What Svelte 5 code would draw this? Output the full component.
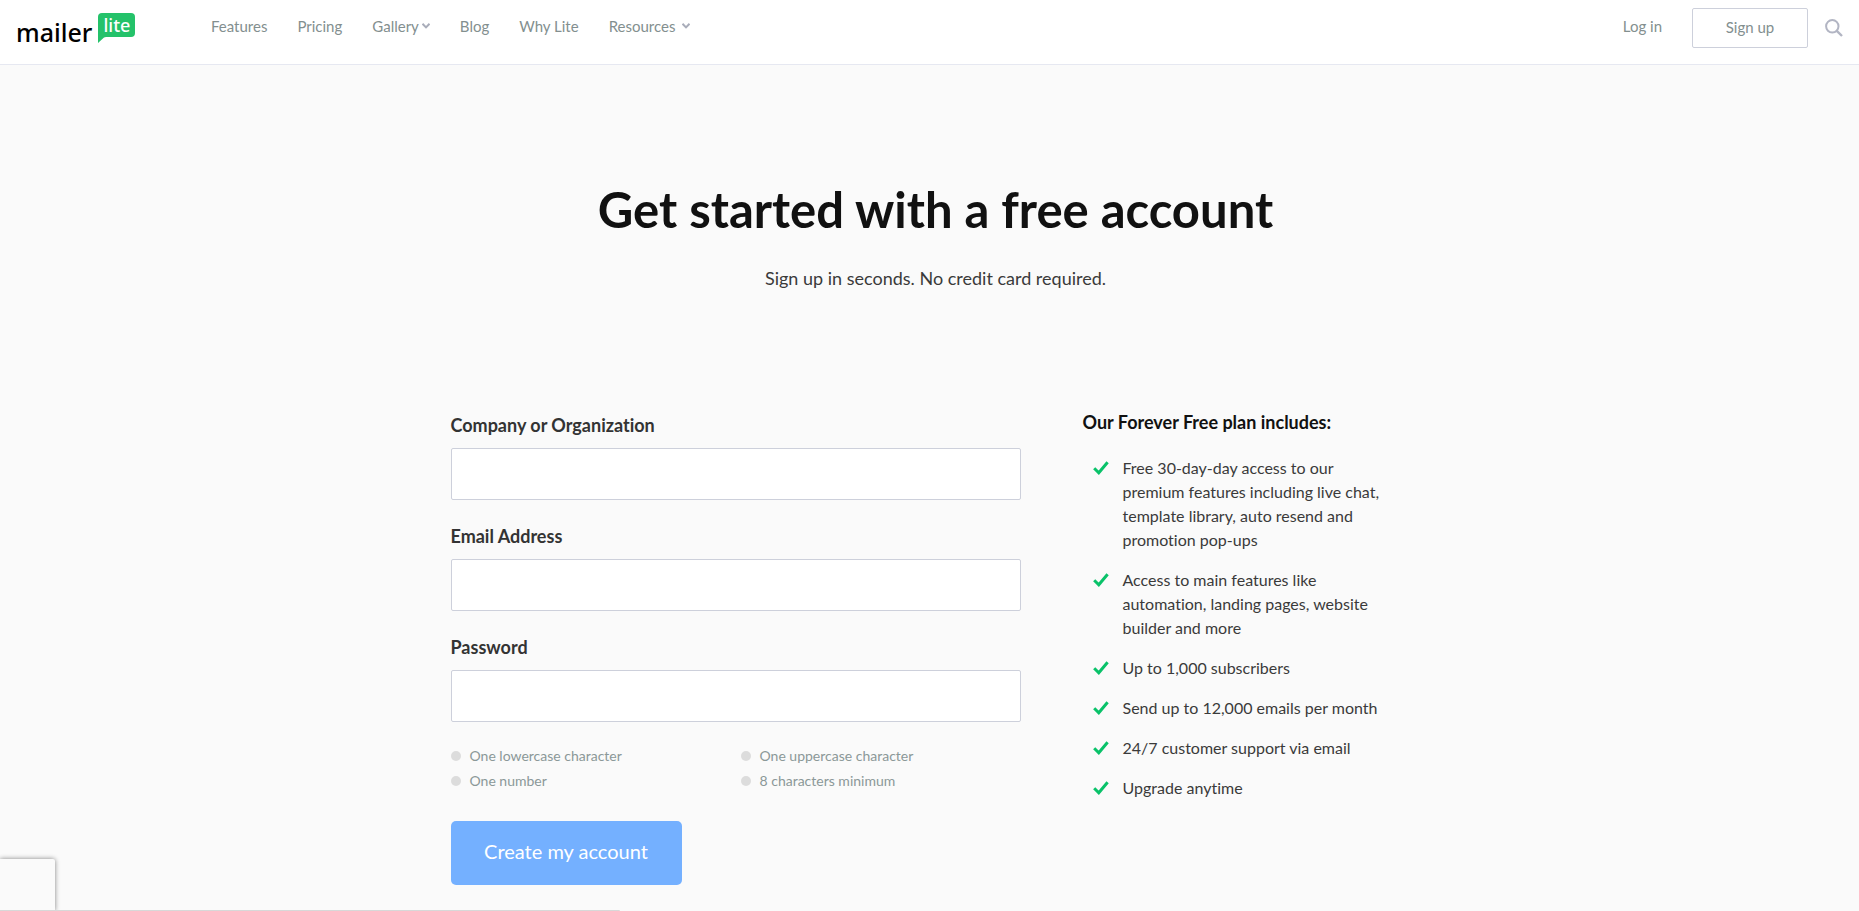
<script lang="ts">
  let company = $state("");
  let email = $state("");
  let password = $state("");

  const links = [
    { label: "Features" },
    { label: "Pricing" },
    { label: "Gallery", menu: "tight" },
    { label: "Blog" },
    { label: "Why Lite" },
    { label: "Resources", menu: "loose" },
  ];

  const rules = [
    "One lowercase character",
    "One uppercase character",
    "One number",
    "8 characters minimum",
  ];

  const features = [
    "Free 30-day-day access to our premium features including live chat, template library, auto resend and promotion pop-ups",
    "Access to main features like automation, landing pages, website builder and more",
    "Up to 1,000 subscribers",
    "Send up to 12,000 emails per month",
    "24/7 customer support via email",
    "Upgrade anytime",
  ];

  function handleSubmit(event: SubmitEvent) {
    event.preventDefault();
  }
</script>

<div class="page">
  <header class="header">
    <a class="logo" href="#home" aria-label="MailerLite">
      <span class="logo-name">mailer</span>
      <span class="logo-tag">
        lite
        <svg class="logo-tail" width="8" height="6" viewBox="0 0 8 6" aria-hidden="true">
          <path d="M0 0H8L6 0.6L0 6Z" fill="#24c26a" />
        </svg>
      </span>
    </a>

    <nav class="nav">
      {#each links as link}
        <a class="nav-link {link.menu ?? ''}" href="#{link.label}">
          {link.label}
          {#if link.menu}
            <svg width="8" height="6" viewBox="0 0 8 6" aria-hidden="true">
              <path d="M0.5 0.8L4 4.4L7.5 0.8" fill="none" stroke="#a9adba" stroke-width="2" />
            </svg>
          {/if}
        </a>
      {/each}
    </nav>

    <div class="actions">
      <a class="nav-link" href="#login">Log in</a>
      <a class="signup" href="#signup">Sign up</a>
      <button class="search" type="button" aria-label="Search">
        <svg width="18" height="18" viewBox="0 0 18 18" aria-hidden="true">
          <g fill="none" stroke="#b2b5c3" stroke-width="2">
            <circle cx="7.3" cy="7.3" r="6.2" />
            <path d="M11.8 11.8L17 17" stroke-width="2.4" />
          </g>
        </svg>
      </button>
    </div>
  </header>

  <main class="main">
    <h1>Get started with a free account</h1>
    <p class="subtitle">Sign up in seconds. No credit card required.</p>

    <div class="columns">
      <form class="form" onsubmit={handleSubmit}>
        <div class="fields">
          <div class="field">
            <label for="company">Company or Organization</label>
            <input id="company" type="text" bind:value={company} />
          </div>
          <div class="field">
            <label for="email">Email Address</label>
            <input id="email" type="email" bind:value={email} />
          </div>
          <div class="field">
            <label for="password">Password</label>
            <input id="password" type="password" bind:value={password} />
          </div>
        </div>

        <ul class="rules">
          {#each rules as rule}
            <li>{rule}</li>
          {/each}
        </ul>

        <button class="submit" type="submit">Create my account</button>
      </form>

      <aside class="plan">
        <h2>Our Forever Free plan includes:</h2>
        <ul>
          {#each features as feature}
            <li>
              <svg width="16" height="14" viewBox="0 0 16 14" aria-hidden="true">
                <path d="M1.2 7.2L5.8 11.8L14.6 1.2" fill="none" stroke="#09c269" stroke-width="3" />
              </svg>
              <span>{feature}</span>
            </li>
          {/each}
        </ul>
      </aside>
    </div>
  </main>

  <div class="captcha"></div>
  <div class="status"></div>
</div>

<style>
  :global(body) {
    background: #fafafa;
  }

  .page,
  .page * {
    box-sizing: border-box;
  }

  .page {
    font-family: Lato, "Open Sans", sans-serif;
    font-variant-ligatures: none;
    color: #3a3a3a;
  }

  .page a {
    text-decoration: none;
  }

  .header {
    display: flex;
    align-items: flex-start;
    height: 65px;
    padding: 8px 16px 0;
    background: #fff;
    border-bottom: 1px solid #e6e8f1;
  }

  .logo {
    display: flex;
    align-items: flex-start;
    gap: 6px;
    width: 195px;
    padding-top: 5px;
  }

  .logo-name {
    padding-top: 4px;
    color: #000;
    font-family: "Noto Sans", sans-serif;
    font-size: 25px;
    font-weight: 500;
    line-height: 30px;
  }

  .logo-tag {
    position: relative;
    width: 37px;
    height: 24px;
    border-radius: 4px 4px 4px 0;
    background: #24c26a;
    color: #fff;
    font-family: "Noto Sans", sans-serif;
    font-size: 18px;
    font-weight: 500;
    line-height: 24px;
    text-align: center;
  }

  .logo-tail {
    position: absolute;
    left: 0;
    top: 100%;
  }

  .nav {
    display: flex;
    gap: 30px;
  }

  .nav-link {
    display: flex;
    align-items: center;
    color: #838f8f;
    font-size: 15px;
    line-height: 36px;
  }

  .tight {
    gap: 3px;
  }

  .loose {
    gap: 7px;
  }

  .actions {
    display: flex;
    align-items: flex-start;
    margin-left: auto;
  }

  .signup {
    width: 116px;
    height: 40px;
    margin: 0 17px 0 30px;
    border: 1px solid #cdd0db;
    border-radius: 2px;
    color: #838f8f;
    font-size: 15px;
    line-height: 36px;
    text-align: center;
  }

  .search {
    display: flex;
    align-items: center;
    height: 40px;
    padding: 0;
    border: 0;
    background: none;
    cursor: pointer;
  }

  .main {
    padding: 112px 0 26px 12px;
  }

  h1 {
    margin: 0;
    color: #111;
    font-size: 49px;
    font-weight: 700;
    line-height: 64px;
    text-align: center;
  }

  .subtitle {
    margin: 24px 0 0;
    font-size: 18px;
    line-height: 26px;
    text-align: center;
  }

  .columns {
    display: flex;
    justify-content: space-between;
    max-width: 970px;
    margin: 118px auto 0;
  }

  .form {
    width: 570px;
    padding-top: 4px;
  }

  .fields {
    display: flex;
    flex-direction: column;
    gap: 24px;
  }

  .field label {
    display: block;
    margin-bottom: 11px;
    color: #333;
    font-size: 18px;
    font-weight: 700;
    line-height: 24px;
  }

  .field input {
    display: block;
    width: 100%;
    height: 52px;
    padding: 0 16px;
    border: 1px solid #cdd0db;
    border-radius: 2px;
    background: #fff;
    color: #333;
    font: inherit;
    font-size: 18px;
  }

  .rules {
    display: grid;
    grid-template-columns: 290px 1fr;
    margin: 21px 0 28px;
    padding: 0;
    list-style: none;
  }

  .rules li {
    display: flex;
    align-items: center;
    gap: 9px;
    color: #8b9898;
    font-size: 14px;
    line-height: 25px;
  }

  .rules li::before {
    content: "";
    width: 10px;
    height: 10px;
    border-radius: 50%;
    background: #dcdcdc;
  }

  .submit {
    width: 231px;
    height: 64px;
    padding: 0 0 4px;
    border: 0;
    border-radius: 5px;
    background: #74b0ff;
    color: #fff;
    font-family: inherit;
    font-size: 20px;
    cursor: pointer;
  }

  .plan {
    width: 338px;
  }

  .plan h2 {
    margin: 0 0 21px;
    color: #111;
    font-size: 18px;
    font-weight: 700;
    line-height: 26px;
  }

  .plan ul {
    display: flex;
    flex-direction: column;
    gap: 16px;
    margin: 0;
    padding: 0 40px 0 10px;
    list-style: none;
  }

  .plan li {
    display: flex;
    align-items: flex-start;
    gap: 14px;
    font-size: 16px;
    line-height: 24px;
  }

  .plan svg {
    flex: none;
    margin-top: 5px;
  }

  .captcha {
    position: fixed;
    left: 0;
    bottom: 0;
    width: 55px;
    height: 52px;
    border-top-right-radius: 2px;
    background: #fafafa;
    box-shadow: 0 0 5px #808080;
  }

  .status {
    position: fixed;
    left: 0;
    bottom: 0;
    width: 620px;
    height: 1px;
    border-top-right-radius: 2px;
    background: #d8d8d8;
  }
</style>
